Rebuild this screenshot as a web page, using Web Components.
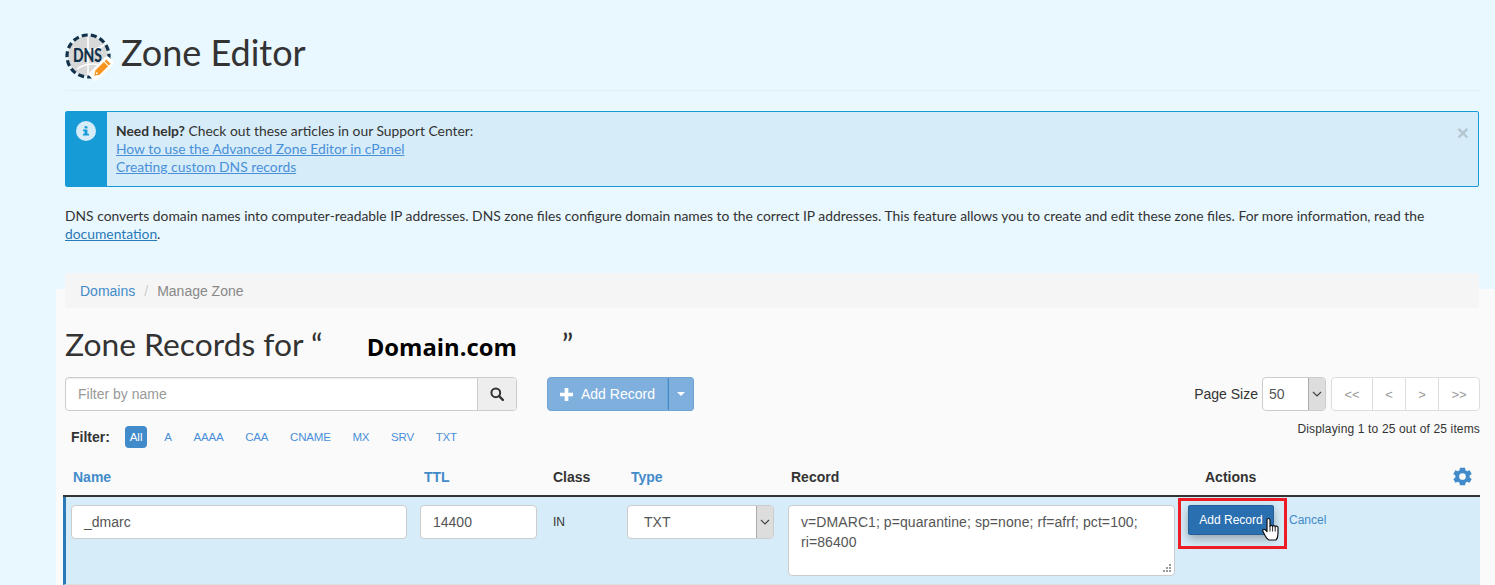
<!DOCTYPE html>
<html>
<head>
<meta charset="utf-8">
<title>Zone Editor</title>
<style>
  html, body { margin: 0; padding: 0; height: 585px; overflow: hidden; background: #e9f7fe; }
  body { font-family: "Liberation Sans", Arial, sans-serif; font-size: 14px; color: #333; }
</style>
</head>
<body>
<zone-page>
  <zone-header slot="top" title-text="Zone Editor"></zone-header>
  <help-alert slot="top">
    <b>Need help?</b> Check out these articles in our Support Center:<br>
    <a href="#a">How to use the Advanced Zone Editor in cPanel</a><br>
    <a href="#b">Creating custom DNS records</a>
  </help-alert>
  <zone-intro slot="top"></zone-intro>
  <crumb-bar></crumb-bar>
  <records-title></records-title>
  <zone-toolbar></zone-toolbar>
  <filter-tabs></filter-tabs>
  <records-table></records-table>
</zone-page>

<script>
// little helper so each element is just a style + markup
function shadow(el, html) {
  el.attachShadow({mode: "open"}).innerHTML = html;
}

class ZonePage extends HTMLElement {
  constructor() {
    super();
    shadow(this, `
    <style>
      :host { display: block; }
      .top { padding: 0 15px 0 65px; height: 289px; box-sizing: border-box; }
      .panel { display: flow-root; background: #fafafa; margin-left: 56px; padding: 0 15px 0 9px; height: 296px; }
    </style>
    <div class="top"><slot name="top"></slot></div>
    <div class="panel"><slot></slot></div>`);
  }
}

class ZoneHeader extends HTMLElement {
  constructor() {
    super();
    shadow(this, `
    <style>
      :host { display: flex; align-items: center; gap: 9px; height: 91px; box-sizing: border-box; padding-top: 18px; border-bottom: 1px solid #e6eef1; }
      svg { width: 47px; height: 48px; margin-top: 5px; flex: none; overflow: visible; }
      h1 { margin: 0 0 5px; font: 400 36px/40px Lato, sans-serif; color: #333; }
    </style>
    <svg viewBox="0 0 47 48">
      <circle cx="23" cy="23" r="20" fill="#d8d8d8"/>
      <path d="M8 15 Q23 22 39 12 M12 36 Q24 28 38 33 M23 3 V43" fill="none" stroke="#fff" stroke-width="1.500"/>
      <circle cx="23" cy="23" r="21" fill="none" stroke="#12314a" stroke-width="3.200" stroke-dasharray="6 3.200"/>
      <text x="8" y="28.500" textLength="29" lengthAdjust="spacingAndGlyphs" font-family="Lato, sans-serif" font-weight="900" font-size="18" fill="#12314a">DNS</text>
      <g transform="rotate(45 36 36)">
        <rect x="30.500" y="22" width="11" height="27" rx="3" fill="#fff"/>
        <path d="M33 25.500h6v2.500h-6z" fill="#f7941d"/>
        <path d="M33 29h6v12l-3 4.500-3-4.500z" fill="#f7941d"/>
        <circle cx="36" cy="42" r=".9" fill="#fff"/>
      </g>
    </svg>
    <h1></h1>`);
    this.shadowRoot.querySelector("h1").textContent = this.getAttribute("title-text");
  }
}

class HelpAlert extends HTMLElement {
  constructor() {
    super();
    shadow(this, `
    <style>
      :host { display: flex; margin: 20px 1px 0 0; height: 76px; box-sizing: border-box; border: 1px solid #179bd7; border-radius: 2px; background: #d6ecf9; font: 13.850px/18px Lato, sans-serif; color: #333; position: relative; }
      .side { width: 41px; background: #179bd7; flex: none; display: flex; justify-content: center; padding: 9px 1px 0 0; box-sizing: border-box; }
      .side svg { width: 20px; height: 20px; }
      .body { padding: 10px 9px; }
      ::slotted(a) { color: #4a90d9; text-decoration: underline; }
      .close { position: absolute; right: 9px; top: 10px; font: 700 21px/21px "Liberation Sans", sans-serif; color: #333; opacity: .2; }
    </style>
    <div class="side">
      <svg viewBox="0 0 20 20">
        <circle cx="10" cy="10" r="10" fill="#d6ecf9"/>
        <rect x="8.600" y="5.200" width="2.800" height="2.200" fill="#179bd7"/>
        <path d="M7 8.400h4.400v4.400H13v1.800H7v-1.800h1.500v-2.600H7z" fill="#179bd7"/>
      </svg>
    </div>
    <div class="body"><slot></slot></div>
    <div class="close">×</div>`);
  }
}

class ZoneIntro extends HTMLElement {
  constructor() {
    super();
    shadow(this, `
    <style>
      :host { display: block; margin-top: 20px; font: 13.850px/18px Lato, sans-serif; color: #333; }
      a { color: #2a7ab8; }
    </style>
    DNS converts domain names into computer-readable IP addresses. DNS zone files configure domain names to the correct IP addresses. This feature allows you to create and edit these zone files. For more information, read the <a href="#doc">documentation</a>.`);
  }
}

class CrumbBar extends HTMLElement {
  constructor() {
    super();
    shadow(this, `
    <style>
      :host { display: flex; gap: 9px; margin: -16px 1px 0 0; height: 35px; align-items: center; background: #f5f5f5; border-radius: 4px; padding: 0 15px; position: relative; }
      a { color: #428bca; text-decoration: none; }
      .sep { color: #ccc; }
      .cur { color: #888; }
    </style>
    <a href="#domains">Domains</a><span class="sep">/</span><span class="cur">Manage Zone</span>`);
  }
}

class RecordsTitle extends HTMLElement {
  constructor() {
    super();
    shadow(this, `
    <style>
      :host { display: flex; align-items: center; height: 38px; margin-top: 17px; font: 31.800px/38px Lato, sans-serif; color: #333; }
      b { font: 700 23.800px/38px "Open Sans", sans-serif; color: #000; margin: 0 45px 0 44px; position: relative; top: 3px; }
    </style>
    <span>Zone Records for “</span><b>Domain.com</b><span>”</span>`);
  }
}

class ZoneToolbar extends HTMLElement {
  constructor() {
    super();
    shadow(this, `
    <style>
      :host { display: flex; align-items: flex-start; margin-top: 14px; height: 34px; }
      .search { display: flex; width: 452px; height: 34px; box-sizing: border-box; border: 1px solid #ccc; border-radius: 4px; background: #fff; box-shadow: inset 0 1px 1px rgba(0,0,0,.075); }
      .search .ph { flex: 1; padding: 0 12px; line-height: 32px; color: #999; }
      .search .go { width: 38px; background: #eee; border-left: 1px solid #ccc; border-radius: 0 3px 3px 0; display: flex; align-items: center; justify-content: center; }
      .search svg { width: 14px; height: 14px; }
      .add { display: flex; margin-left: 30px; height: 34px; color: #fff; }
      .add .main { padding: 0 12px 0 12px; display: flex; align-items: center; gap: 8px; background: #7fb0dd; border: 1px solid #6ea3d3; border-radius: 4px 0 0 4px; }
      .add .main svg { width: 13px; height: 13px; }
      .add .car { width: 26px; background: #7fb0dd; border: 1px solid #6ea3d3; border-left: 1px solid #428bca; border-radius: 0 4px 4px 0; display: flex; align-items: center; justify-content: center; box-sizing: border-box; }
      .add .car i { border: 4px solid transparent; border-top-color: #fff; border-bottom: 0; }
      .right { margin-left: auto; display: flex; align-items: center; height: 34px; }
      .sel { display: flex; width: 64px; height: 34px; box-sizing: border-box; margin-left: 4px; border: 1px solid #ccc; border-radius: 4px; background: #fff; }
      .sel span { flex: 1; padding-left: 6px; line-height: 32px; color: #555; }
      .sel .arr { width: 16px; background: #ddd; border-left: 1px solid #aaa; border-radius: 0 3px 3px 0; display: flex; align-items: center; justify-content: center; }
      .sel svg { width: 10px; height: 6px; }
      .pager { display: flex; margin-left: 5px; height: 34px; box-sizing: border-box; border: 1px solid #ddd; border-radius: 4px; background: #fff; color: #999; font-size: 13px; }
      .pager span { border-left: 1px solid #ddd; display: flex; align-items: center; justify-content: center; width: 32px; }
      .pager span:first-child { border-left: 0; width: 40px; }
      .pager span:last-child { width: 40px; }
    </style>
    <div class="search">
      <div class="ph">Filter by name</div>
      <div class="go"><svg viewBox="0 0 14 14"><circle cx="5.800" cy="5.800" r="4.400" fill="none" stroke="#333" stroke-width="2"/><path d="M9 9l3.800 3.800" stroke="#333" stroke-width="2.400" stroke-linecap="round"/></svg></div>
    </div>
    <div class="add">
      <div class="main"><svg viewBox="0 0 12 12"><path d="M4.300 0h3.400v4.300H12v3.400H7.700V12H4.300V7.700H0V4.300h4.300z" fill="#fff"/></svg>Add Record</div>
      <div class="car"><i></i></div>
    </div>
    <div class="right">
      Page Size
      <div class="sel"><span>50</span><div class="arr"><svg viewBox="0 0 10 6"><path d="M1 1l4 4 4-4" fill="none" stroke="#444" stroke-width="1.200"/></svg></div></div>
      <div class="pager"><span>&lt;&lt;</span><span>&lt;</span><span>&gt;</span><span>&gt;&gt;</span></div>
    </div>`);
  }
}

class FilterTabs extends HTMLElement {
  constructor() {
    super();
    shadow(this, `
    <style>
      :host { display: flex; align-items: center; gap: 11.800px; margin-top: 15px; height: 22px; position: relative; font-size: 11.500px; letter-spacing: -.2px; color: #4a90d9; padding-left: 6px; }
      b { color: #333; font-size: 14px; letter-spacing: 0; margin-right: 3px; }
      span { padding: 0 5px; line-height: 22px; }
      span.on { background: #428bca; color: #fff; border-radius: 4px; letter-spacing: 0; }
      .count { position: absolute; right: 0; top: -4px; color: #333; font-size: 12px; letter-spacing: .15px; line-height: 14px; }
    </style>
    <b>Filter:</b><span class="on">All</span><span>A</span><span>AAAA</span><span>CAA</span><span>CNAME</span><span>MX</span><span>SRV</span><span>TXT</span>
    <div class="count">Displaying 1 to 25 out of 25 items</div>`);
  }
}

class RecordsTable extends HTMLElement {
  constructor() {
    super();
    shadow(this, `
    <style>
      :host { display: block; margin: 12px 0 0 -2px; position: relative; }
      .cols { display: grid; }
      .head { grid-template-columns: 353px 129px 78px 160px 398px 1fr; height: 33px; padding-bottom: 2px; border-bottom: 2px solid #333; align-items: center; font-weight: 700; }
      .head > div { padding-left: 8px; }
      .head > div:first-child { padding-left: 10px; }
      .head .sort { color: #428bca; }
      .head .act { padding-left: 24px; display: flex; justify-content: space-between; align-items: center; padding-right: 6px; }
      .head svg { width: 23px; height: 23px; }
      .row { grid-template-columns: 350px 129px 78px 160px 398px 1fr; height: 88px; box-sizing: border-box; background: #d6ecf9; border-left: 3px solid #2a7ab8; border-bottom: 1px solid #ddd; padding-top: 8px; color: #555; }
      .field { box-sizing: border-box; height: 34px; line-height: 32px; background: #fff; border: 1px solid #ccc; border-radius: 4px; padding-left: 12px; }
      .name { margin-left: 5px; width: 336px; }
      .ttl { margin-left: 4px; width: 117px; }
      .cls { padding-left: 8px; line-height: 34px; color: #333; font-size: 12px; }
      .type { margin-left: 4px; width: 147px; display: flex; padding-left: 16px; padding-right: 0; }
      .type span { flex: 1; }
      .type .arr { width: 16px; background: #ddd; border-left: 1px solid #aaa; border-radius: 0 3px 3px 0; display: flex; align-items: center; justify-content: center; }
      .type svg { width: 10px; height: 6px; }
      .rec { margin-left: 5px; width: 387px; height: 71px; position: relative; box-sizing: border-box; background: #fff; border: 1px solid #ccc; border-radius: 4px; padding: 6px 12px; line-height: 20px; letter-spacing: .08px; }
      .rec svg { position: absolute; right: 2px; bottom: 2px; width: 9px; height: 9px; }
      .acts { position: relative; padding-left: 7px; display: flex; align-items: flex-start; font-size: 12px; }
      .btn { width: 86px; height: 30px; box-sizing: border-box; background: #2a6fb0; border: 1px solid #245f97; border-radius: 2px; color: #fff; text-align: center; line-height: 28px; box-shadow: 0 4px 10px rgba(0,0,0,.3); }
      .cancel { margin-left: 15px; line-height: 30px; color: #428bca; }
      .red { position: absolute; left: -3px; top: -7px; width: 109px; height: 51px; box-sizing: border-box; border: 3px solid #ee1c25; }
      .hand { position: absolute; left: 81px; top: 12px; width: 18px; height: 25px; }
    </style>
    <div class="cols head">
      <div class="sort">Name</div><div class="sort">TTL</div><div>Class</div><div class="sort">Type</div><div>Record</div>
      <div class="act"><span>Actions</span>
        <svg viewBox="0 0 24 24"><path fill="#428bca" d="M19.400 13a7.500 7.500 0 0 0 0-2l2.200-1.700-2.200-3.700-2.600 1a7.600 7.600 0 0 0-1.700-1l-.4-2.800H9.300l-.4 2.800a7.600 7.600 0 0 0-1.700 1l-2.600-1-2.200 3.700L4.600 11a7.500 7.500 0 0 0 0 2l-2.200 1.700 2.200 3.700 2.600-1a7.600 7.600 0 0 0 1.700 1l.4 2.800h5.400l.4-2.800a7.600 7.600 0 0 0 1.700-1l2.600 1 2.200-3.700zM12 15.500a3.500 3.500 0 1 1 0-7 3.500 3.500 0 0 1 0 7z"/></svg>
      </div>
    </div>
    <div class="cols row">
      <div><div class="field name">_dmarc</div></div>
      <div><div class="field ttl">14400</div></div>
      <div class="cls">IN</div>
      <div><div class="field type"><span>TXT</span><div class="arr"><svg viewBox="0 0 10 6"><path d="M1 1l4 4 4-4" fill="none" stroke="#444" stroke-width="1.200"/></svg></div></div></div>
      <div><div class="rec">v=DMARC1; p=quarantine; sp=none; rf=afrf; pct=100; ri=86400
        <svg viewBox="0 0 9 9"><g fill="#999"><rect x="6" y="0" width="2" height="2"/><rect x="3" y="3" width="2" height="2"/><rect x="6" y="3" width="2" height="2"/><rect x="0" y="6" width="2" height="2"/><rect x="3" y="6" width="2" height="2"/><rect x="6" y="6" width="2" height="2"/></g></svg>
      </div></div>
      <div class="acts">
        <div class="btn">Add Record</div><div class="cancel">Cancel</div>
        <div class="red"></div>
        <svg class="hand" viewBox="0 0 18 24"><path d="M5 2.500c0-2 3-2 3 0V9c0-1.500 2.600-1.500 2.600 0 0-1.200 2.600-1.200 2.600.3 0-1 2.800-.8 2.800.7v6c0 3-1.500 6-2 6.500H7c-1.500-.5-3-2.500-4-4.500L1 14c-1-2 1-3 2.500-1.500L5 14z" fill="#fff" stroke="#111" stroke-width="1.200" stroke-linejoin="round"/><path d="M8 9v5M10.600 9v5M13.200 9.500V14" stroke="#111" stroke-width=".9" fill="none"/></svg>
      </div>
    </div>`);
  }
}

customElements.define("zone-page", ZonePage);
customElements.define("zone-header", ZoneHeader);
customElements.define("help-alert", HelpAlert);
customElements.define("zone-intro", ZoneIntro);
customElements.define("crumb-bar", CrumbBar);
customElements.define("records-title", RecordsTitle);
customElements.define("zone-toolbar", ZoneToolbar);
customElements.define("filter-tabs", FilterTabs);
customElements.define("records-table", RecordsTable);
</script>
</body>
</html>
